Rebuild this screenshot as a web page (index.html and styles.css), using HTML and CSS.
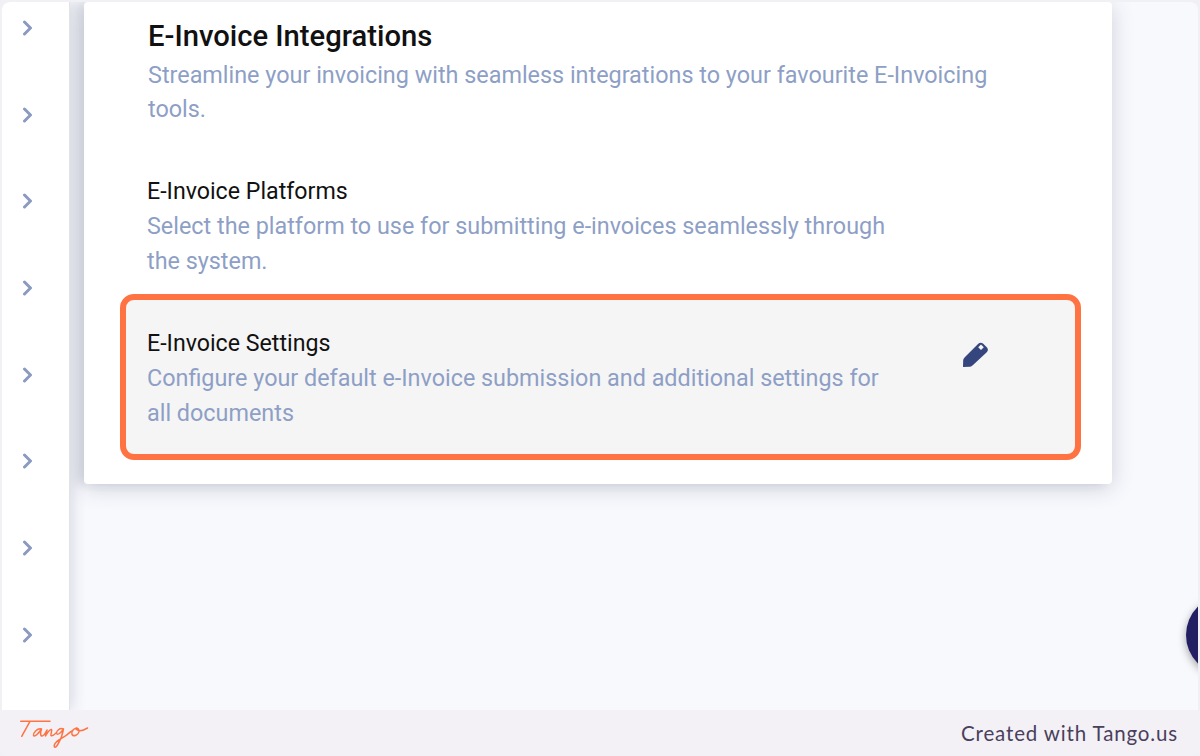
FILE: index.html
```html
<!DOCTYPE html>
<html lang="en">
<head>
<meta charset="utf-8">
<title>E-Invoice Integrations</title>
<link rel="stylesheet" href="styles.css">
</head>
<body>
<div class="frame">
  <div class="app">
    <nav class="rail">
      <svg class="chev" viewBox="0 0 12 16"><path d="M2.500 2l6 6-6 6"/></svg>
      <svg class="chev" viewBox="0 0 12 16"><path d="M2.500 2l6 6-6 6"/></svg>
      <svg class="chev" viewBox="0 0 12 16"><path d="M2.500 2l6 6-6 6"/></svg>
      <svg class="chev" viewBox="0 0 12 16"><path d="M2.500 2l6 6-6 6"/></svg>
      <svg class="chev" viewBox="0 0 12 16"><path d="M2.500 2l6 6-6 6"/></svg>
      <svg class="chev" viewBox="0 0 12 16"><path d="M2.500 2l6 6-6 6"/></svg>
      <svg class="chev" viewBox="0 0 12 16"><path d="M2.500 2l6 6-6 6"/></svg>
      <svg class="chev" viewBox="0 0 12 16"><path d="M2.500 2l6 6-6 6"/></svg>
    </nav>
    <main class="main">
      <section class="card">
        <header class="card-head">
          <h1 class="title">E-Invoice Integrations</h1>
          <p class="lead">Streamline your invoicing with seamless integrations to your favourite E-Invoicing tools.</p>
        </header>
        <div class="row">
          <div class="row-text">
            <h2 class="row-title">E-Invoice Platforms</h2>
            <p class="row-desc">Select the platform to use for submitting e-invoices seamlessly through the system.</p>
          </div>
        </div>
        <div class="row row-active">
          <div class="row-text">
            <h2 class="row-title">E-Invoice Settings</h2>
            <p class="row-desc">Configure your default e-Invoice submission and additional settings for all documents</p>
          </div>
          <svg class="pencil" viewBox="0 0 28 28"><path fill-rule="evenodd" d="M1 26L1.200 19Q1.500 17.500 3 16L16 3Q18.500 .7 21 2.500L25 6.500Q27 9 24.500 11.500L11 24Q9.500 25.500 8 25.800ZM19 3.500L16.200 6.300 19 9.100 21.800 6.300Z"/></svg>
        </div>
      </section>
      <div class="fab"></div>
    </main>
  </div>
  <footer class="footer">
    <svg class="logo" viewBox="0 0 80 40"><path d="M5.700 8.300L35 8.300M15 8.300L6.700 23.300M26.500 16C22 15 18 20 18.500 22.500 19.500 24.500 24 20 26.500 16 25.500 19 25 23 27 23 29 23 30.500 20 32 17 31.500 19 30.500 22 30.500 23 32.500 19.500 35 16 36.500 16.500 37.500 17 35.500 21 36 22.500 37 23.500 39.500 21.500 41 20M48 16C45 14.500 41 18 41.500 20.500 42.500 22.500 46 20 48.500 16 47.500 22 45 28 42.500 32 40.500 35 38.500 35 39.500 31.500 41 27.500 47 25.500 51 22.500 53 21 55 19 57 18M62 15.500C58.500 15 56 18.500 57 21.500 58.500 24 63.500 22 64 18.500 64.300 16.500 63 15 61 15 61.500 18.500 67 18.500 72.500 15"/></svg>
    <span class="credit">Created with Tango.us</span>
  </footer>
</div>
</body>
</html>
```

FILE: styles.css
```css
* { box-sizing: border-box; }
html, body { margin: 0; height: 100%; }
body {
  background: #f1f1f5;
  font-family: Roboto, "Liberation Sans", sans-serif;
  overflow: hidden;
}
.frame {
  width: 1200px;
  height: 756px;
  display: flex;
  flex-direction: column;
  padding: 2px 2px 0 2px;
}
.app {
  flex: 0 0 708px;
  display: flex;
  overflow: hidden;
  border-radius: 8px 8px 0 0;
}
.rail {
  flex: 0 0 68px;
  position: relative;
  z-index: 1;
  background: #fff;
  border-right: 1px solid #e2e3e6;
  box-shadow: 2px 0 14px rgba(40, 50, 80, .16);
  display: flex;
  flex-direction: column;
  align-items: flex-start;
  gap: 70.700px;
  padding: 18px 0 0 20px;
}
.chev {
  width: 12px;
  height: 16px;
  fill: none;
  stroke: #8b9ac0;
  stroke-width: 3;
  stroke-linecap: round;
  stroke-linejoin: round;
}
.main {
  flex: 1;
  position: relative;
  background: #f8f9fd;
  padding: 0 86px 0 14px;
  overflow: hidden;
}
.card {
  width: 1028px;
  height: 482px;
  background: #fff;
  border-radius: 4px;
  box-shadow: 0 4px 22px rgba(40, 50, 80, .2), -8px 0 10px rgba(40, 50, 80, .1);
  padding: 14px 33px 0 33px;
  display: flex;
  flex-direction: column;
}
.card-head { padding: 0 80px 0 31px; }
.title {
  margin: 0 0 2px;
  font-size: 29.200px;
  line-height: 40px;
  font-weight: 500;
  color: #111;
}
.lead {
  margin: 0;
  font-size: 23.380px;
  line-height: 34px;
  color: #8e9fc6;
}
.row {
  display: flex;
  justify-content: space-between;
  align-items: flex-start;
  padding: 48px 30px 0 30px;
}
.row-text { width: 745px; }
.row-title {
  margin: 0;
  font-size: 23.200px;
  line-height: 35px;
  font-weight: 400;
  color: #111;
}
.row-desc {
  margin: 0;
  font-size: 23.360px;
  line-height: 35px;
  color: #8e9fc6;
}
.row-active {
  width: 961.500px;
  height: 165.500px;
  margin: 15px 0 0 2.500px;
  padding: 26px 85.500px 0 21.500px;
  background: #f5f5f5;
  border: 6px solid #ff7342;
  border-radius: 14px;
}
.pencil { width: 28px; height: 28px; margin-top: 15px; fill: #35467f; }
.fab {
  position: absolute;
  left: 1116px;
  top: 593px;
  width: 80px;
  height: 80px;
  border-radius: 50%;
  background: #231f63;
  box-shadow: 0 3px 8px rgba(0, 0, 0, .35);
}
.footer {
  flex: 0 0 46px;
  margin: 0 -2px;
  padding: 0 22px 0 15px;
  background: #f3f1f6;
  border-radius: 0 0 10px 10px;
  display: flex;
  justify-content: space-between;
  align-items: center;
}
.logo {
  width: 80px;
  height: 40px;
  fill: none;
  stroke: #ff7342;
  stroke-width: 1.500;
  stroke-linecap: round;
  stroke-linejoin: round;
}
.credit {
  font-family: Lato, "Liberation Sans", sans-serif;
  font-size: 20.500px;
  letter-spacing: .85px;
  color: #4a3f5c;
}
```
